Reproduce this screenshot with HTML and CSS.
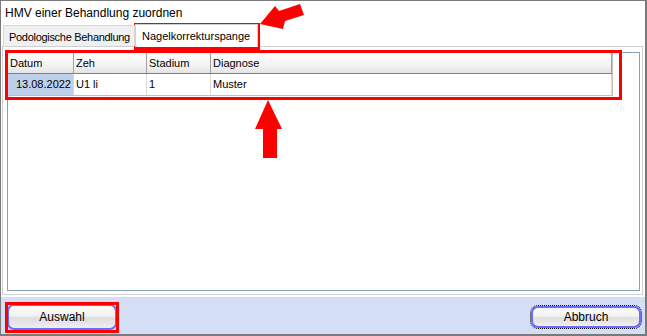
FILE: index.html
```html
<!DOCTYPE html>
<html lang="de">
<head>
    <meta charset="UTF-8">
    <title>HMV einer Behandlung zuordnen</title>
    <link rel="stylesheet" href="styles.css">
</head>
<body>
    <div class="window">
        <div class="title">HMV einer Behandlung zuordnen</div>

        <div class="tabs">
            <div class="tab">Podologische Behandlung</div>
            <div class="tab active">Nagelkorrekturspange</div>
        </div>

        <div class="panel">
            <div class="grid-box">
                <div class="grid">
                    <div class="row head">
                        <div class="cell c-datum">Datum</div>
                        <div class="cell c-zeh">Zeh</div>
                        <div class="cell c-stadium">Stadium</div>
                        <div class="cell c-diag">Diagnose</div>
                    </div>
                    <div class="row">
                        <div class="cell c-datum selected">13.08.2022</div>
                        <div class="cell c-zeh">U1 li</div>
                        <div class="cell c-stadium">1</div>
                        <div class="cell c-diag">Muster</div>
                    </div>
                </div>
            </div>
        </div>

        <div class="footer">
            <button class="btn">Auswahl</button>
            <div class="focus">
                <button class="btn">Abbruch</button>
            </div>
        </div>

        <!-- annotations -->
        <div class="mark mark-tab"></div>
        <div class="mark mark-grid"></div>
        <div class="mark mark-btn"></div>
        <svg class="arrow arrow-tab" width="50" height="35" viewBox="0 0 50 35">
            <polygon points="2,24 17,6 21,11 42,4 46,15 27,21 25,29" fill="#f00"/>
        </svg>
        <svg class="arrow arrow-up" width="30" height="60" viewBox="0 0 30 60">
            <polygon points="14,0 28,29 23,29 23,58 9,58 9,29 1,29" fill="#f00"/>
        </svg>
    </div>
</body>
</html>
```

FILE: styles.css
```css
* {
    box-sizing: border-box;
}

body {
    margin: 0;
    font-family: "Liberation Sans", Arial, sans-serif;
    font-size: 11px;
    color: #000;
    background: #fff;
}

.window {
    position: relative;
    width: 647px;
    height: 336px;
    border: 1px solid #7a7a7a;
    border-right-width: 2px;
    border-bottom-width: 2px;
    background: #fff;
    display: flex;
    flex-direction: column;
}

.title {
    height: 23px;
    padding: 5px 0 0 4px;
    font-size: 12px;
}

.tabs {
    display: flex;
    align-items: flex-end;
    height: 22px;
    padding-left: 2px;
    position: relative;
    z-index: 1;
}

.tab {
    height: 21px;
    width: 132px;
    padding: 5px 0 0 5px;
    background: #f0f0f0;
    border: 1px solid #d9d9d9;
    border-bottom: none;
    white-space: nowrap;
    letter-spacing: -0.3px;
}

.tab.active {
    width: 123px;
    height: 23px;
    background: #fff;
    padding: 5px 0 0 6px;
    margin-bottom: -1px;
    border-color: #d0d0d0;
    letter-spacing: 0;
}

.panel {
    height: 249px;
    margin: 0 2px 0 1px;
    border: 1px solid #d0d0d0;
    padding: 5px 2px 3px 4px;
}

.grid-box {
    height: 100%;
    border: 1px solid #87a1b7;
    padding: 0 26px 0 0;
}

.grid {
    border-right: 1px solid #c0c0c0;
    border-bottom: 1px solid #c0c0c0;
}

.row {
    display: flex;
    height: 21px;
}

.row.head {
    height: 21px;
    background: linear-gradient(#fff, #f4f4f4 60%, #e4e4e4);
    border-bottom: 1px solid #808080;
}

.cell {
    padding: 4px 3px 0 2px;
    white-space: nowrap;
}

.head .cell {
    border-right: 1px solid #a0a0a0;
}

.row:not(.head) .cell {
    border-right: 1px solid #d8d8d8;
}

.c-datum {
    width: 66px;
}

.c-zeh {
    width: 73px;
}

.c-stadium {
    width: 64px;
}

.c-diag {
    flex: 1;
}

.cell.selected {
    background: #bcd0ea;
    text-align: right;
    padding-right: 2px;
}

.footer {
    flex: 1;
    margin-top: 2px;
    background: #d4def4;
    display: flex;
    justify-content: space-between;
    align-items: center;
    padding: 2px 4px 0 6px;
}

.focus {
    outline: 1px dotted #000;
    border-radius: 7px;
}

.btn {
    display: block;
    width: 110px;
    height: 26px;
    border: 2px solid #6b6bff;
    border-radius: 7px;
    background: linear-gradient(#fbfbfb, #f2f2f2 45%, #dedede 55%, #efefef);
    font-family: "Liberation Sans", Arial, sans-serif;
    font-size: 12px;
    color: #000;
    padding: 0;
}

.focus .btn {
    width: 110px;
    height: 22px;
}

.mark {
    position: absolute;
    border: 3px solid #f00;
}

.mark-tab {
    left: 133px;
    top: 22px;
    width: 126px;
    height: 27px;
}

.mark-grid {
    left: 4px;
    top: 49px;
    width: 617px;
    height: 50px;
}

.mark-btn {
    left: 4px;
    top: 301px;
    width: 114px;
    height: 31px;
}

.arrow {
    position: absolute;
}

.arrow-tab {
    left: 257px;
    top: -1px;
}

.arrow-up {
    left: 253px;
    top: 99px;
}
```
